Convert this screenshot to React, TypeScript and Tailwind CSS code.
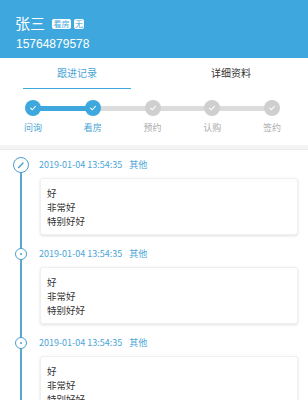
import React from "react";

const steps = [
  { label: "问询", done: true },
  { label: "看房", done: true },
  { label: "预约", done: false },
  { label: "认购", done: false },
  { label: "签约", done: false },
];

function Check() {
  return (
    <svg width="8" height="8" viewBox="0 0 10 10" fill="none">
      <path d="M2 5.2 L4.2 7.2 L8 3" stroke="white" strokeWidth="1.3" strokeLinecap="round" strokeLinejoin="round" />
    </svg>
  );
}

function Entry({ first }: { first?: boolean }) {
  return (
    <div className="flex flex-col">
      <div className="flex items-center h-[14px]">
        <div className="w-[39px] flex justify-center shrink-0 relative">
          {first ? (
            <div className="w-[16px] h-[16px] rounded-full border-[1.5px] border-[#4a9fcf] bg-white flex items-center justify-center ml-[3px]">
              <svg width="8" height="8" viewBox="0 0 10 10">
                <path d="M2 8 L7.5 2.5" stroke="#4a9fcf" strokeWidth="1.8" strokeLinecap="round" />
              </svg>
            </div>
          ) : (
            <div className="w-[12px] h-[12px] rounded-full border-[1.5px] border-[#4a9fcf] bg-white flex items-center justify-center ml-[3px]">
              <div className="w-[2px] h-[2px] rounded-full bg-[#4a9fcf]" />
            </div>
          )}
        </div>
        <div className="text-[9px] text-[#4aa5d8] whitespace-nowrap">
          2019-01-04 13:54:35<span className="ml-[7px]">其他</span>
        </div>
      </div>
      <div className="ml-[40px] mr-[10px] mt-[6px] bg-white rounded-[3px] border border-[#f0f0f0] shadow-[0_1px_3px_rgba(0,0,0,0.13)] px-[6px] pt-[7px] pb-[6px] text-[9.5px] leading-[14px] text-[#333]">
        <div>好</div>
        <div>非常好</div>
        <div>特别好好</div>
      </div>
    </div>
  );
}

export default function App() {
  return (
    <div
      className="w-[308px] h-[400px] overflow-hidden bg-white relative"
      style={{ fontFamily: '"Noto Sans CJK SC", "Noto Sans", sans-serif' }}
    >
      {/* header */}
      <div className="bg-[#3ea8de] h-[58px] px-[15px] pt-[12px] text-white">
        <div className="flex items-center gap-[3px] h-[20px]">
          <span className="text-[15px] leading-none">张三</span>
          <span className="ml-[4px] mt-[3px] bg-white text-[#3ea8de] text-[8px] leading-[10px] rounded-[2px] px-[1.5px]">看房</span>
          <span className="mt-[3px] bg-white text-[#3ea8de] text-[8px] leading-[10px] rounded-[2px] px-[1px]">无</span>
        </div>
        <div className="text-[12px] leading-[16px] mt-[4px] ml-[1px]" style={{ fontFamily: '"Liberation Sans", Arial, sans-serif' }}>15764879578</div>
      </div>

      {/* tabs */}
      <div className="flex h-[31px]">
        <div className="w-1/2 flex flex-col items-center">
          <div className="text-[10px] text-[#4aa5d8] mt-[8px] leading-[14px]">跟进记录</div>
          <div className="mt-auto w-[108px] h-[1.5px] bg-[#3ea8de]" />
        </div>
        <div className="w-1/2 flex justify-center">
          <div className="text-[10px] text-[#333] mt-[8px] leading-[14px]">详细资料</div>
        </div>
      </div>

      {/* steps */}
      <div className="relative h-[56px] px-[24px]">
        <div className="absolute left-[32px] right-[35px] top-[17px] h-[5px] bg-[#dcdcdc]" />
        <div className="absolute left-[32px] w-[61px] top-[17px] h-[5px] bg-[#3ea8de]" />
        <div className="relative flex justify-between pr-[3px]">
          {steps.map((s, i) => (
            <div key={i} className="flex flex-col items-center w-[18px]">
              <div
                className={
                  "mt-[11px] w-[16px] h-[16px] rounded-full flex items-center justify-center " +
                  (s.done ? "bg-[#3ea8de]" : "bg-[#cfcfcf]")
                }
              >
                <Check />
              </div>
              <div className={"mt-[5px] text-[9px] leading-[13px] whitespace-nowrap " + (s.done ? "text-[#4aa5d8]" : "text-[#aaa]")}>
                {s.label}
              </div>
            </div>
          ))}
        </div>
      </div>

      <div className="h-[5px] bg-[#f4f4f4] border-b border-[#ececec]" />

      {/* timeline */}
      <div className="relative pt-[8px]">
        <div className="absolute left-[20px] top-[22px] bottom-0 w-[1.5px] bg-[#5ba7d1]" />
        <div className="relative flex flex-col gap-[12px]">
          <Entry first />
          <Entry />
          <Entry />
        </div>
      </div>
    </div>
  );
}
